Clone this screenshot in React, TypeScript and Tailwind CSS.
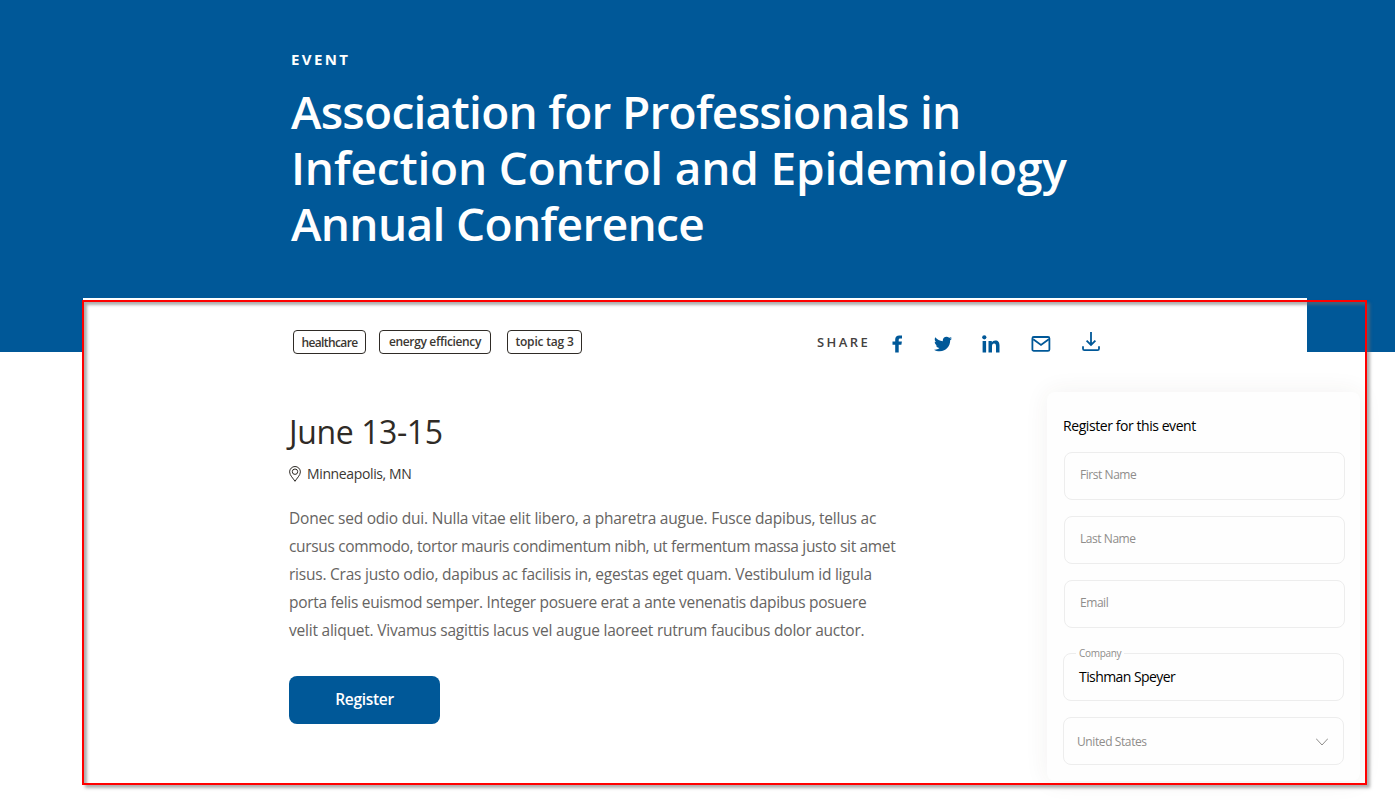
import { ReactNode } from "react";
import { FaTwitter } from "react-icons/fa";

function Tag({ className, children }: { className: string; children: ReactNode }) {
  return (
    <span
      className={`flex h-6 items-center justify-center whitespace-nowrap rounded border border-[#2f2b26] text-xs font-semibold text-[#3b3732] ${className}`}
    >
      {children}
    </span>
  );
}

function Field({ label }: { label: string }) {
  return (
    <div className="ml-px flex h-12 w-[281px] items-center rounded-lg border border-[#ededed] pb-0.5 pl-[15px] text-xs tracking-[-0.45px] text-[#8f8d8b]">
      {label}
    </div>
  );
}

function FacebookIcon() {
  return (
    <svg width="11" height="18" viewBox="0 0 11 18" fill="#005898">
      <path d="M3.200 17.500V9.800H.5V6.500h2.700V4.300C3.200 1.700 4.800.4 7.200.4c1.100 0 2.100.1 2.800.2v2.800H8.300c-1.300 0-1.600.7-1.600 1.600v1.500h3.200l-.5 3.300H6.700v7.700z" />
    </svg>
  );
}

function LinkedInIcon() {
  return (
    <svg width="18" height="18" viewBox="0 0 18 18" fill="#005898">
      <circle cx="2.300" cy="2.300" r="2.100" />
      <path d="M.6 5.900h3.500V17.500H.6zM6.500 5.900h3.300v1.600c.6-1.100 1.900-1.900 3.500-1.900 3.100 0 4.200 2 4.200 5v6.900H14v-6.200c0-1.500-.4-2.700-1.900-2.700s-2.100 1.200-2.100 2.700v6.200H6.500z" />
    </svg>
  );
}

function MailIcon() {
  return (
    <svg width="20" height="16" viewBox="0 0 20 16" fill="none" stroke="#005898" strokeWidth="1.8">
      <rect x="1.400" y="1" width="17" height="13.800" rx="1.400" />
      <path d="M2.200 3.200 10 9l7.800-5.800" />
    </svg>
  );
}

function DownloadIcon() {
  return (
    <svg width="18" height="20" viewBox="0 0 18 20" fill="none" stroke="#005898" strokeWidth="1.8">
      <path d="M9 0v12.800M4.600 8.600 9 13l4.400-4.400M1 14.200v2.600a1.400 1.400 0 0 0 1.400 1.400h13.200a1.400 1.400 0 0 0 1.400-1.400v-2.600" />
    </svg>
  );
}

function PinIcon() {
  return (
    <svg width="12" height="16" viewBox="0 0 12 16" fill="none" stroke="#2f2b26">
      <path d="M6 15.300C4.400 12.500.6 9.300.6 5.900a5.400 5.400 0 0 1 10.800 0C11.400 9.300 7.600 12.500 6 15.300Z" />
      <circle cx="6" cy="5.700" r="2.700" />
    </svg>
  );
}

export default function App() {
  return (
    <div className="relative h-[806px] w-[1397px] overflow-hidden bg-white font-['Open_Sans','Noto_Sans',sans-serif]">
      <header className="h-[352px] w-[1395px] bg-[#005898] pl-[291px] pt-[47px] text-white">
        <p className="text-[15px] font-bold leading-6 tracking-[2.4px]">EVENT</p>
        <h1 className="mt-[12px] whitespace-nowrap text-[46px] font-semibold leading-[56px]">
          <span className="block tracking-[-0.72px]">Association for Professionals in</span>
          <span className="block tracking-[-0.17px]">Infection Control and Epidemiology</span>
          <span className="block tracking-[-0.64px]">Annual Conference</span>
        </h1>
      </header>

      <main className="relative -mt-[54px] ml-[83px] flex h-[508px] w-[1312px]">
        <section className="h-full w-[1224px] shrink-0 bg-white pl-[206px] pt-8">
          <div className="flex h-6 items-center pl-1">
            <Tag className="w-[73px] pt-0.5 tracking-[-0.6px]">healthcare</Tag>
            <Tag className="ml-[13px] w-[112px] tracking-[-0.35px]">energy efficiency</Tag>
            <Tag className="ml-4 w-[75px] tracking-[-0.2px]">topic tag 3</Tag>
            <span className="ml-[235px] mt-0.5 w-[75px] text-[13px] font-semibold tracking-[2.4px] text-[#45423f]">SHARE</span>
            <div className="mt-[3px]"><FacebookIcon /></div>
            <FaTwitter className="ml-[31px] mt-1 size-[18px] text-[#005898]" />
            <div className="ml-[30px] mt-[3px]"><LinkedInIcon /></div>
            <div className="ml-[31px] mt-1"><MailIcon /></div>
            <div className="ml-[31px]"><DownloadIcon /></div>
          </div>
          <h2 className="mt-[56px] text-[32px] leading-[44px] tracking-[-0.4px] text-[#2f2b26]">June 13-15</h2>
          <div className="mt-[8px] flex h-6 items-center gap-1.5 text-sm tracking-[-0.37px] text-[#3b3732]">
            <PinIcon />
            Minneapolis, MN
          </div>
          <p className="mt-[18px] whitespace-nowrap text-[15.5px] leading-7 text-[#666462]">
            <span className="block tracking-[-0.21px]">Donec sed odio dui. Nulla vitae elit libero, a pharetra augue. Fusce dapibus, tellus ac</span>
            <span className="block tracking-[-0.33px]">cursus commodo, tortor mauris condimentum nibh, ut fermentum massa justo sit amet</span>
            <span className="block tracking-[-0.23px]">risus. Cras justo odio, dapibus ac facilisis in, egestas eget quam. Vestibulum id ligula</span>
            <span className="block tracking-[-0.31px]">porta felis euismod semper. Integer posuere erat a ante venenatis dapibus posuere</span>
            <span className="block tracking-[-0.22px]">velit aliquet. Vivamus sagittis lacus vel augue laoreet rutrum faucibus dolor auctor.</span>
          </p>
          <button className="mt-[32px] h-12 w-[151px] rounded-lg bg-[#005898] text-[15.5px] font-semibold tracking-[-0.3px] text-white">
            Register
          </button>
        </section>

        <aside className="-ml-[260px] mt-[94px] h-[389px] w-[313px] shrink-0 rounded-lg bg-[#fefefe] pl-4 pt-[22px] shadow-[0_0_24px_rgba(70,60,40,0.07)]">
          <h3 className="h-6 text-sm leading-6 tracking-[-0.43px] text-black">Register for this event</h3>
          <form className="mt-[14px] flex flex-col gap-4">
            <Field label="First Name" />
            <Field label="Last Name" />
            <Field label="Email" />
            <div className="relative mt-[9px] flex h-12 w-[281px] items-center rounded-lg border border-[#ededed] pl-[15px] text-sm tracking-[-0.57px] text-black">
              <span className="absolute -top-[9px] left-3 bg-[#fefefe] px-[3px] text-[10px] leading-4 tracking-[-0.3px] text-[#8f8d8b]">Company</span>
              Tishman Speyer
            </div>
            <div className="flex h-12 w-[281px] items-center justify-between rounded-lg border border-[#ededed] pl-[13px] pr-[15px] pt-px text-xs tracking-[-0.4px] text-[#8f8d8b]">
              United States
              <svg width="12" height="8" viewBox="0 0 12 8" fill="none" stroke="#8f8d8b"><path d="m0 .5 6 6.500 6-6.500" /></svg>
            </div>
          </form>
        </aside>
      </main>

      <div className="pointer-events-none absolute left-[82px] top-[300px] h-[485px] w-[1285px] border-2 border-[#ff0000] shadow-[3px_3px_3px_rgba(110,110,110,0.55),inset_3px_3px_3px_rgba(110,110,110,0.55)]" />
    </div>
  );
}
